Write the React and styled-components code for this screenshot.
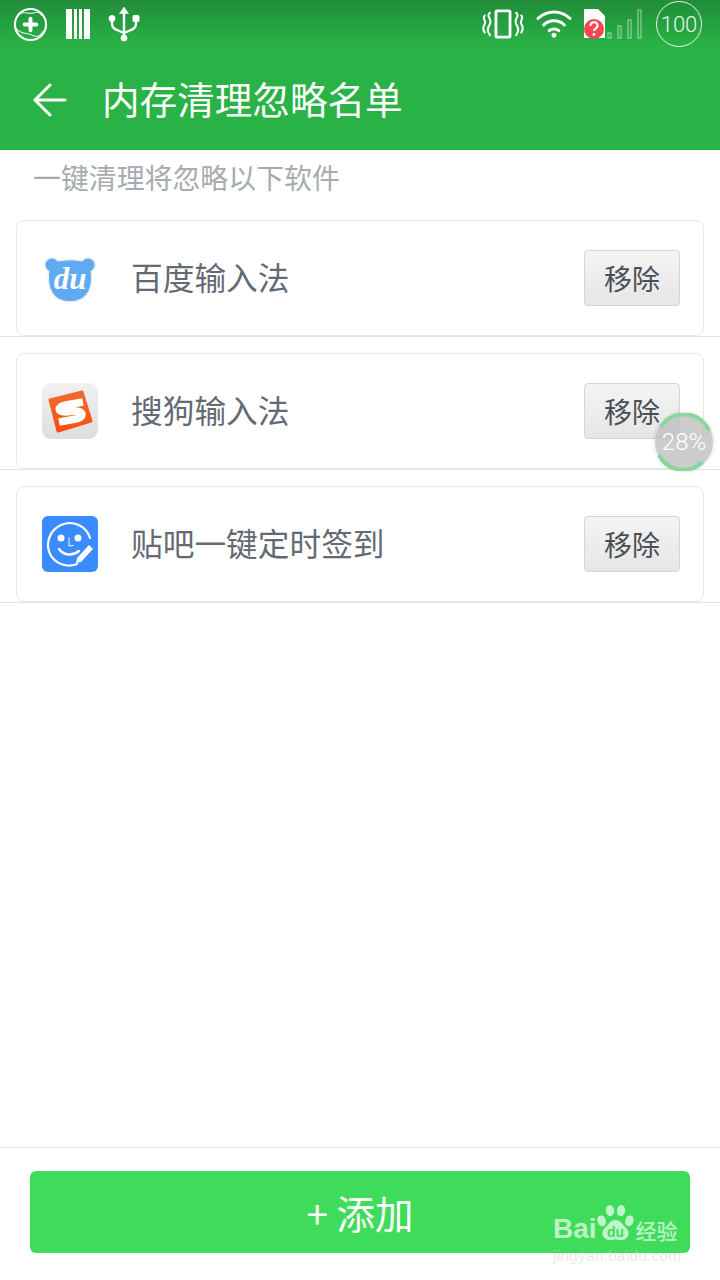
import React from "react";
import styled, { createGlobalStyle } from "styled-components";

const GlobalStyle = createGlobalStyle`
  html, body { margin: 0; padding: 0; background: #fff; }
  * { box-sizing: border-box; }
  body { font-family: "Noto Sans CJK SC", "Noto Sans", sans-serif; }
`;

const Page = styled.div`
  position: relative;
  width: 720px;
  height: 1280px;
  display: flex;
  flex-direction: column;
  overflow: hidden;
  background: #fff;
`;

const Header = styled.header`
  height: 150px;
  flex: none;
  display: flex;
  flex-direction: column;
  background: linear-gradient(180deg, #218c39 0, #29b145 44px, #2ab346 150px);
`;

const StatusBar = styled.div`
  height: 50px;
  display: flex;
  align-items: center;
  justify-content: space-between;
  padding: 0 18px 2px 13px;
`;

const StatusGroup = styled.div`
  display: flex;
  align-items: center;
  gap: ${(p) => p.$gap}px;
`;

const Battery = styled.div`
  width: 46px;
  height: 46px;
  border-radius: 50%;
  border: 1.5px solid #e8f6ea;
  color: #e8f6ea;
  display: flex;
  align-items: center;
  justify-content: center;
  font-family: "Roboto", sans-serif;
  font-weight: 300;
  font-size: 22px;
`;

const TitleBar = styled.div`
  flex: 1;
  display: flex;
  align-items: center;
  padding: 0 0 0 32px;
  gap: 35px;
`;

const Title = styled.h1`
  margin: 0;
  padding-bottom: 4px;
  color: #fff;
  font-size: 37.6px;
  font-weight: 400;
  line-height: 50px;
`;

const Hint = styled.div`
  height: 70px;
  padding: 9px 0 0 33px;
  color: #a6abb0;
  font-size: 27.9px;
  line-height: 36px;
`;

const Row = styled.div`
  height: ${(p) => (p.$first ? 117 : 133)}px;
  border-bottom: 1px solid #dfe3e6;
  padding: ${(p) => (p.$first ? 0 : 16)}px 16px 0;
`;

const Card = styled.div`
  height: 116px;
  display: flex;
  align-items: center;
  padding: 0 23px 0 25px;
  border: 1px solid #e6e9ec;
  border-radius: 8px;
  background: #fff;
`;

const IconSlot = styled.div`
  width: 56px;
  height: 56px;
  flex: none;
  display: flex;
  align-items: center;
  justify-content: center;
`;

const AppName = styled.div`
  flex: 1;
  margin-left: 33px;
  padding-bottom: 5px;
  color: #636a74;
  font-size: 31.7px;
  line-height: 40px;
`;

const RemoveButton = styled.button`
  width: 96px;
  height: 56px;
  padding: 0;
  border: 1px solid #d2d4d6;
  border-radius: 4px;
  background: linear-gradient(180deg, #f4f4f4, #e6e6e6);
  color: #4a4f55;
  font-family: inherit;
  font-size: 28px;
  line-height: 1;
`;

const Spacer = styled.div`
  flex: 1;
`;

const Footer = styled.footer`
  flex: none;
  height: 133px;
  border-top: 1px solid #e6e8e9;
  padding: 23px 30px 0;
`;

const AddButton = styled.button`
  width: 100%;
  height: 82px;
  border: 0;
  border-radius: 6px;
  background: #3fdc5b;
  color: #fff;
  font-family: inherit;
  font-size: 38.5px;
  line-height: 1;
  padding: 0;
`;

const Float = styled.div`
  position: absolute;
  left: 655px;
  top: 413px;
  width: 58px;
  height: 58px;
  border-radius: 50%;
  background: rgba(190, 190, 190, 0.78);
  box-shadow: 0 0 4px rgba(0, 0, 0, 0.18);
  display: flex;
  align-items: center;
  justify-content: center;
  color: #fff;
  font-family: "Roboto", sans-serif;
  font-weight: 300;
  font-size: 24px;
`;

const FloatRing = styled.svg`
  position: absolute;
  inset: 0;
`;

const Watermark = styled.div`
  position: absolute;
  left: 553px;
  top: 1202px;
  width: 130px;
  color: rgba(255, 255, 255, 0.68);
`;

const WatermarkLine = styled.div`
  display: flex;
  align-items: flex-end;
  height: 44px;
  font-family: "Liberation Sans", sans-serif;
  font-weight: 700;
  font-size: 28px;
  line-height: 34px;
`;

const WatermarkCjk = styled.span`
  font-family: "Noto Sans CJK SC", sans-serif;
  font-weight: 500;
  font-size: 21px;
  line-height: 32px;
  margin-left: 2px;
`;

const WatermarkUrl = styled.div`
  margin-top: 2px;
  color: rgba(215, 215, 215, 0.55);
  font-family: "Liberation Sans", sans-serif;
  font-size: 15.5px;
  line-height: 16px;
  white-space: nowrap;
  letter-spacing: 0.2px;
`;

const PlusCircleIcon = () => (
  <svg width="35" height="35" viewBox="0 0 36 36" fill="none" stroke="#fff">
    <circle cx="18" cy="18" r="16" strokeWidth="2.2" />
    <path d="M3 22c6 7 12 4 17 7s9 0 11-4M7 7c6-3 10 1 15-1s6 1 8 3" strokeWidth="1.2" opacity="0.8" />
    <path d="M18 12v12M12 18h12" strokeWidth="4" strokeLinecap="round" />
  </svg>
);

const BarsIcon = () => (
  <svg width="24" height="30" viewBox="0 0 24 30" fill="#fff">
    <rect x="0" y="0" width="6" height="30" />
    <rect x="8" y="0" width="3" height="30" />
    <rect x="13" y="0" width="3" height="30" />
    <rect x="18" y="0" width="6" height="30" />
  </svg>
);

const UsbIcon = () => (
  <svg width="32" height="36" viewBox="0 0 32 36" fill="#fff" stroke="#fff">
    <path d="M16 1l-4.5 6.500h9z" strokeWidth="0.5" />
    <path d="M16 6v26M4 13v4c0 4 2 6 5 7l7 3 7-3c3-1 5-3 5-7v-4" strokeWidth="2.4" fill="none" />
    <circle cx="4" cy="12.500" r="3" />
    <rect x="25" y="9.500" width="6" height="6" rx="1" />
    <circle cx="16" cy="32" r="3" />
  </svg>
);

const VibrateIcon = () => (
  <svg width="42" height="30" viewBox="0 0 44 32" fill="none" stroke="#fff">
    <rect x="14.500" y="2" width="15" height="28" strokeWidth="3" rx="1" />
    <path d="M8 4c-5 4 3 6 0 12-3 5-3 7 0 12M2.500 7c-3 3 2 6 0 9-2 3-2 6 0 9M36 4c5 4-3 6 0 12 3 5 3 7 0 12M41.500 7c3 3-2 6 0 9 2 3 2 6 0 9" strokeWidth="2.2" strokeLinecap="round" />
  </svg>
);

const WifiIcon = () => (
  <svg width="36" height="30" viewBox="0 0 38 32" fill="none" stroke="#fff" strokeWidth="3.2" strokeLinecap="round">
    <path d="M2 10c10-9 24-9 34 0M8 17c6-6 16-6 22 0M14 23c3-2 7-2 10 0" />
    <circle cx="19" cy="28" r="2.6" fill="#fff" stroke="none" />
  </svg>
);

const SimIcon = () => (
  <svg width="60" height="32" viewBox="0 0 60 32" fill="none">
    <path d="M0 1h14l7 7v22H0z" fill="#fff" />
    <circle cx="10" cy="21" r="10" fill="#f7464f" />
    <path d="M6.500 18c0-5 7-5 7 0 0 2.500-3.500 2.500-3.500 5" stroke="#fff" strokeWidth="2.2" fill="none" />
    <circle cx="10" cy="26.500" r="1.4" fill="#fff" />
    <g stroke="#fff" strokeOpacity="0.4" strokeWidth="1.5">
      <rect x="24" y="25" width="3" height="5" />
      <rect x="34" y="18" width="3" height="12" />
      <rect x="44" y="12" width="3" height="18" />
      <rect x="54" y="2" width="3" height="28" />
    </g>
  </svg>
);

const BackArrow = () => (
  <svg width="35" height="34" viewBox="0 0 35 34" fill="none" stroke="#fff" strokeWidth="3" strokeLinecap="round">
    <path d="M33 17H3M18 2L3 17l15 15" />
  </svg>
);

const duHead = "M14 12c9-2 19-2 28 0 5 3 7 8 7 15 0 16-8 24-21 24S7 43 7 27c0-7 2-12 7-15z";

const DuIcon = () => (
  <svg width="56" height="56" viewBox="0 0 56 56">
    <g fill="#e9edf0" stroke="#e9edf0" strokeWidth="3">
      <circle cx="10" cy="15" r="6.500" />
      <circle cx="46" cy="15" r="6.500" />
      <path d={duHead} />
    </g>
    <circle cx="10" cy="15" r="6.500" fill="#60aaf3" />
    <circle cx="46" cy="15" r="6.500" fill="#60aaf3" />
    <path d={duHead} fill="#60aaf3" />
    <text x="28" y="39" textAnchor="middle" fontFamily="'Liberation Serif', serif" fontStyle="italic" fontWeight="700" fontSize="31" fill="#fff">du</text>
  </svg>
);

const SogouIcon = () => (
  <svg width="56" height="56" viewBox="0 0 56 56">
    <defs>
      <linearGradient id="sogouBg" x1="0" y1="0" x2="0" y2="1">
        <stop offset="0" stopColor="#f1f1f1" />
        <stop offset="1" stopColor="#dedede" />
      </linearGradient>
      <linearGradient id="sogouFace" x1="0" y1="0" x2="0" y2="1">
        <stop offset="0" stopColor="#f26a30" />
        <stop offset="1" stopColor="#fb4f0a" />
      </linearGradient>
    </defs>
    <rect width="56" height="56" rx="9" fill="url(#sogouBg)" />
    <path d="M8 17L40 9l9 29-33 10z" fill="url(#sogouFace)" stroke="url(#sogouFace)" strokeWidth="3" strokeLinejoin="round" />
    <path d="M41 19L24 22C15 24 15 29 24 29L34 28C42 28 42 35 34 36L17 39" fill="none" stroke="#fff" strokeWidth="7.500" />
  </svg>
);

const TiebaIcon = () => (
  <svg width="56" height="56" viewBox="0 0 56 56">
    <rect width="56" height="56" rx="6" fill="#3a8bfd" />
    <g fill="none" stroke="#fff" strokeLinecap="round">
      <path d="M48 22C44 9 30 4 19 9 8 14 3 27 8 38c5 10 17 14 27 10" strokeWidth="2.2" />
      <path d="M17 33c5 7 14 7 20 2" strokeWidth="2.4" />
      <path d="M27 22v8l4-.5" strokeWidth="1" />
    </g>
    <circle cx="19" cy="22" r="3.500" fill="#fff" />
    <circle cx="36" cy="22" r="3.500" fill="#fff" />
    <path d="M47 29l4 4-12 13-5 1 1-5z" fill="#fff" />
  </svg>
);

const BaiduPaw = () => (
  <svg width="37" height="43" viewBox="0 0 40 46" fill="currentColor">
    <ellipse cx="5" cy="19" rx="4.500" ry="6" transform="rotate(-20 5 19)" />
    <ellipse cx="14" cy="8" rx="4.500" ry="6" transform="rotate(-8 14 8)" />
    <ellipse cx="26" cy="8" rx="4.500" ry="6" transform="rotate(8 26 8)" />
    <ellipse cx="35" cy="19" rx="4.500" ry="6" transform="rotate(20 35 19)" />
    <path d="M20 18c6 0 7 5 11 8 6 5 3 14-5 14-3 0-4-1-6-1s-3 1-6 1c-8 0-11-9-5-14 4-3 5-8 11-8z" />
    <text x="20" y="37" textAnchor="middle" fontFamily="'Liberation Sans', sans-serif" fontWeight="700" fontSize="15" fill="#3fdc5b">du</text>
  </svg>
);

const apps = [
  { name: "百度输入法", icon: <DuIcon /> },
  { name: "搜狗输入法", icon: <SogouIcon /> },
  { name: "贴吧一键定时签到", icon: <TiebaIcon /> },
];

const App = () => {
  return (
    <Page>
      <GlobalStyle />
      <Header>
        <StatusBar>
          <StatusGroup $gap={18}>
            <PlusCircleIcon />
            <BarsIcon />
            <UsbIcon />
          </StatusGroup>
          <StatusGroup $gap={12}>
            <VibrateIcon />
            <WifiIcon />
            <SimIcon />
            <Battery>100</Battery>
          </StatusGroup>
        </StatusBar>
        <TitleBar>
          <BackArrow />
          <Title>内存清理忽略名单</Title>
        </TitleBar>
      </Header>
      <Hint>一键清理将忽略以下软件</Hint>
      {apps.map((app, index) => (
        <Row key={app.name} $first={index === 0}>
          <Card>
            <IconSlot>{app.icon}</IconSlot>
            <AppName>{app.name}</AppName>
            <RemoveButton>移除</RemoveButton>
          </Card>
        </Row>
      ))}
      <Spacer />
      <Footer>
        <AddButton>+ 添加</AddButton>
      </Footer>
      <Float>
        <FloatRing width="58" height="58" viewBox="0 0 58 58" fill="none" stroke="#8bd69b" strokeWidth="4">
          <path d="M6 14A27 27 0 0 1 54 18" />
          <path d="M4 42A27 27 0 0 0 47 49" />
        </FloatRing>
        28%
      </Float>
      <Watermark>
        <WatermarkLine>
          Bai
          <BaiduPaw />
          <WatermarkCjk>经验</WatermarkCjk>
        </WatermarkLine>
        <WatermarkUrl>jingyan.baidu.com</WatermarkUrl>
      </Watermark>
    </Page>
  );
};

export default App;
